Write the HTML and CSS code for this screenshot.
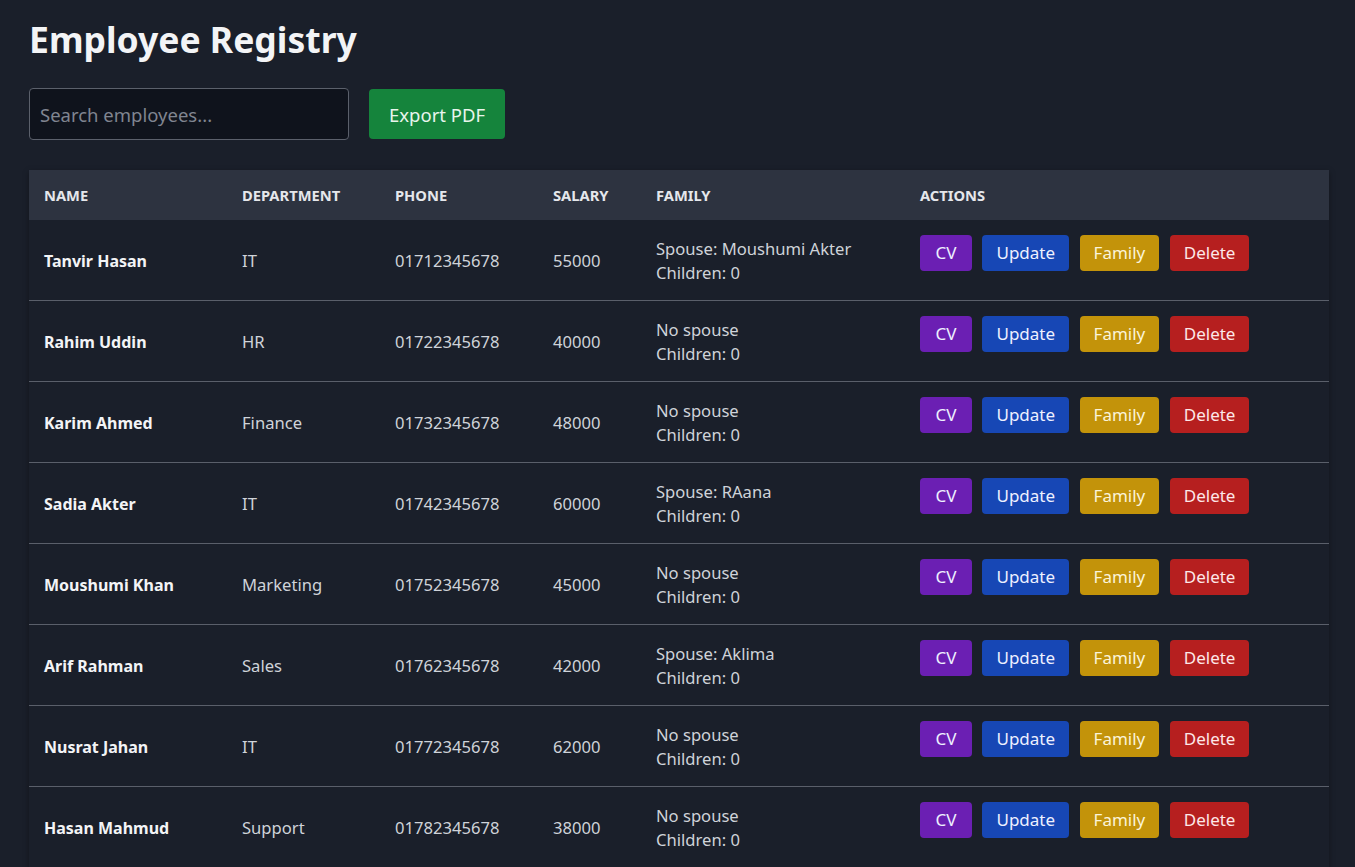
FILE: index.html
```html
<!DOCTYPE html>
<html>
<head>
<meta charset="utf-8">
<link rel="stylesheet" href="styles.css">
</head>
<body>
<div class="page">
  <h1 class="title">Employee Registry</h1>
  <div class="toolbar">
    <input class="search" type="text" placeholder="Search employees...">
    <button class="btn-export">Export PDF</button>
  </div>
  <table class="grid">
    <colgroup>
      <col class="c-name"><col class="c-dept"><col class="c-phone"><col class="c-salary"><col class="c-family"><col class="c-actions">
    </colgroup>
    <thead>
      <tr><th>Name</th><th>Department</th><th>Phone</th><th>Salary</th><th>Family</th><th>Actions</th></tr>
    </thead>
    <tbody>
      <tr><td class="name">Tanvir Hasan</td><td>IT</td><td>01712345678</td><td>55000</td><td><div>Spouse: Moushumi Akter</div><div>Children: 0</div></td><td><div class="actions"><button class="b cv">CV</button><button class="b up">Update</button><button class="b fam">Family</button><button class="b del">Delete</button></div></td></tr>
      <tr><td class="name">Rahim Uddin</td><td>HR</td><td>01722345678</td><td>40000</td><td><div>No spouse</div><div>Children: 0</div></td><td><div class="actions"><button class="b cv">CV</button><button class="b up">Update</button><button class="b fam">Family</button><button class="b del">Delete</button></div></td></tr>
      <tr><td class="name">Karim Ahmed</td><td>Finance</td><td>01732345678</td><td>48000</td><td><div>No spouse</div><div>Children: 0</div></td><td><div class="actions"><button class="b cv">CV</button><button class="b up">Update</button><button class="b fam">Family</button><button class="b del">Delete</button></div></td></tr>
      <tr><td class="name">Sadia Akter</td><td>IT</td><td>01742345678</td><td>60000</td><td><div>Spouse: RAana</div><div>Children: 0</div></td><td><div class="actions"><button class="b cv">CV</button><button class="b up">Update</button><button class="b fam">Family</button><button class="b del">Delete</button></div></td></tr>
      <tr><td class="name">Moushumi Khan</td><td>Marketing</td><td>01752345678</td><td>45000</td><td><div>No spouse</div><div>Children: 0</div></td><td><div class="actions"><button class="b cv">CV</button><button class="b up">Update</button><button class="b fam">Family</button><button class="b del">Delete</button></div></td></tr>
      <tr><td class="name">Arif Rahman</td><td>Sales</td><td>01762345678</td><td>42000</td><td><div>Spouse: Aklima</div><div>Children: 0</div></td><td><div class="actions"><button class="b cv">CV</button><button class="b up">Update</button><button class="b fam">Family</button><button class="b del">Delete</button></div></td></tr>
      <tr><td class="name">Nusrat Jahan</td><td>IT</td><td>01772345678</td><td>62000</td><td><div>No spouse</div><div>Children: 0</div></td><td><div class="actions"><button class="b cv">CV</button><button class="b up">Update</button><button class="b fam">Family</button><button class="b del">Delete</button></div></td></tr>
      <tr><td class="name">Hasan Mahmud</td><td>Support</td><td>01782345678</td><td>38000</td><td><div>No spouse</div><div>Children: 0</div></td><td><div class="actions"><button class="b cv">CV</button><button class="b up">Update</button><button class="b fam">Family</button><button class="b del">Delete</button></div></td></tr>
    </tbody>
  </table>
</div>
</body>
</html>
```
FILE: styles.css
```css
html, body {
  margin: 0;
  padding: 0;
  background: #1a1f2a;
  color: #d1d5db;
  font-family: "Noto Sans", "Open Sans", sans-serif;
}
.page {
  padding: 16px 27px 0 29px;
}
.title {
  margin: 0;
  font-size: 35.5px;
  font-weight: 700;
  color: #f3f4f6;
  line-height: 46px;
}
.toolbar {
  display: flex;
  align-items: center;
  gap: 20px;
  margin-top: 26px;
  margin-bottom: 30px;
}
.search {
  box-sizing: border-box;
  width: 320px;
  height: 52px;
  background: #0f131c;
  border: 1px solid #5b606b;
  border-radius: 4px;
  padding: 0 10px;
  font-family: inherit;
  font-size: 18.5px;
  color: #e5e7eb;
  outline: none;
}
.search::placeholder { color: #808590; }
.btn-export {
  height: 50px;
  padding: 0 20px;
  background: #15843c;
  color: #e8f5ec;
  border: none;
  border-radius: 4px;
  font-family: inherit;
  font-size: 18.5px;
}
.grid {
  width: 1300px;
  border-collapse: collapse;
  table-layout: fixed;
  box-shadow: 0 2px 6px rgba(0,0,0,0.35);
}
.c-name { width: 198px; }
.c-dept { width: 153px; }
.c-phone { width: 158px; }
.c-salary { width: 103px; }
.c-family { width: 264px; }
.c-actions { width: 424px; }
.grid th {
  background: #2d3340;
  height: 50px;
  padding: 0 15px;
  text-align: left;
  font-size: 14.7px;
  font-weight: 700;
  text-transform: uppercase;
  color: #e5e7eb;
}
.grid td {
  height: 78px;
  padding: 2px 15px 0;
  border-bottom: 1px solid #5a5f6a;
  font-size: 16.6px;
  line-height: 24px;
  color: #cfd3d9;
  vertical-align: middle;
}
.grid td.name {
  font-weight: 700;
  font-size: 16px;
  color: #f3f4f6;
}
.actions {
  display: flex;
  gap: 10.5px;
  margin-bottom: 17px;
}
.b {
  height: 36px;
  padding: 0 14px;
  border: none;
  border-radius: 4px;
  font-family: inherit;
  font-size: 17px;
  color: #eef0ff;
}
.cv { background: #6b1fb3; padding: 0 15.5px; }
.up { background: #1747b5; }
.fam { background: #c3930a; color: #fbf3d8; }
.del { background: #b61f1f; color: #fde8e8; }
```
